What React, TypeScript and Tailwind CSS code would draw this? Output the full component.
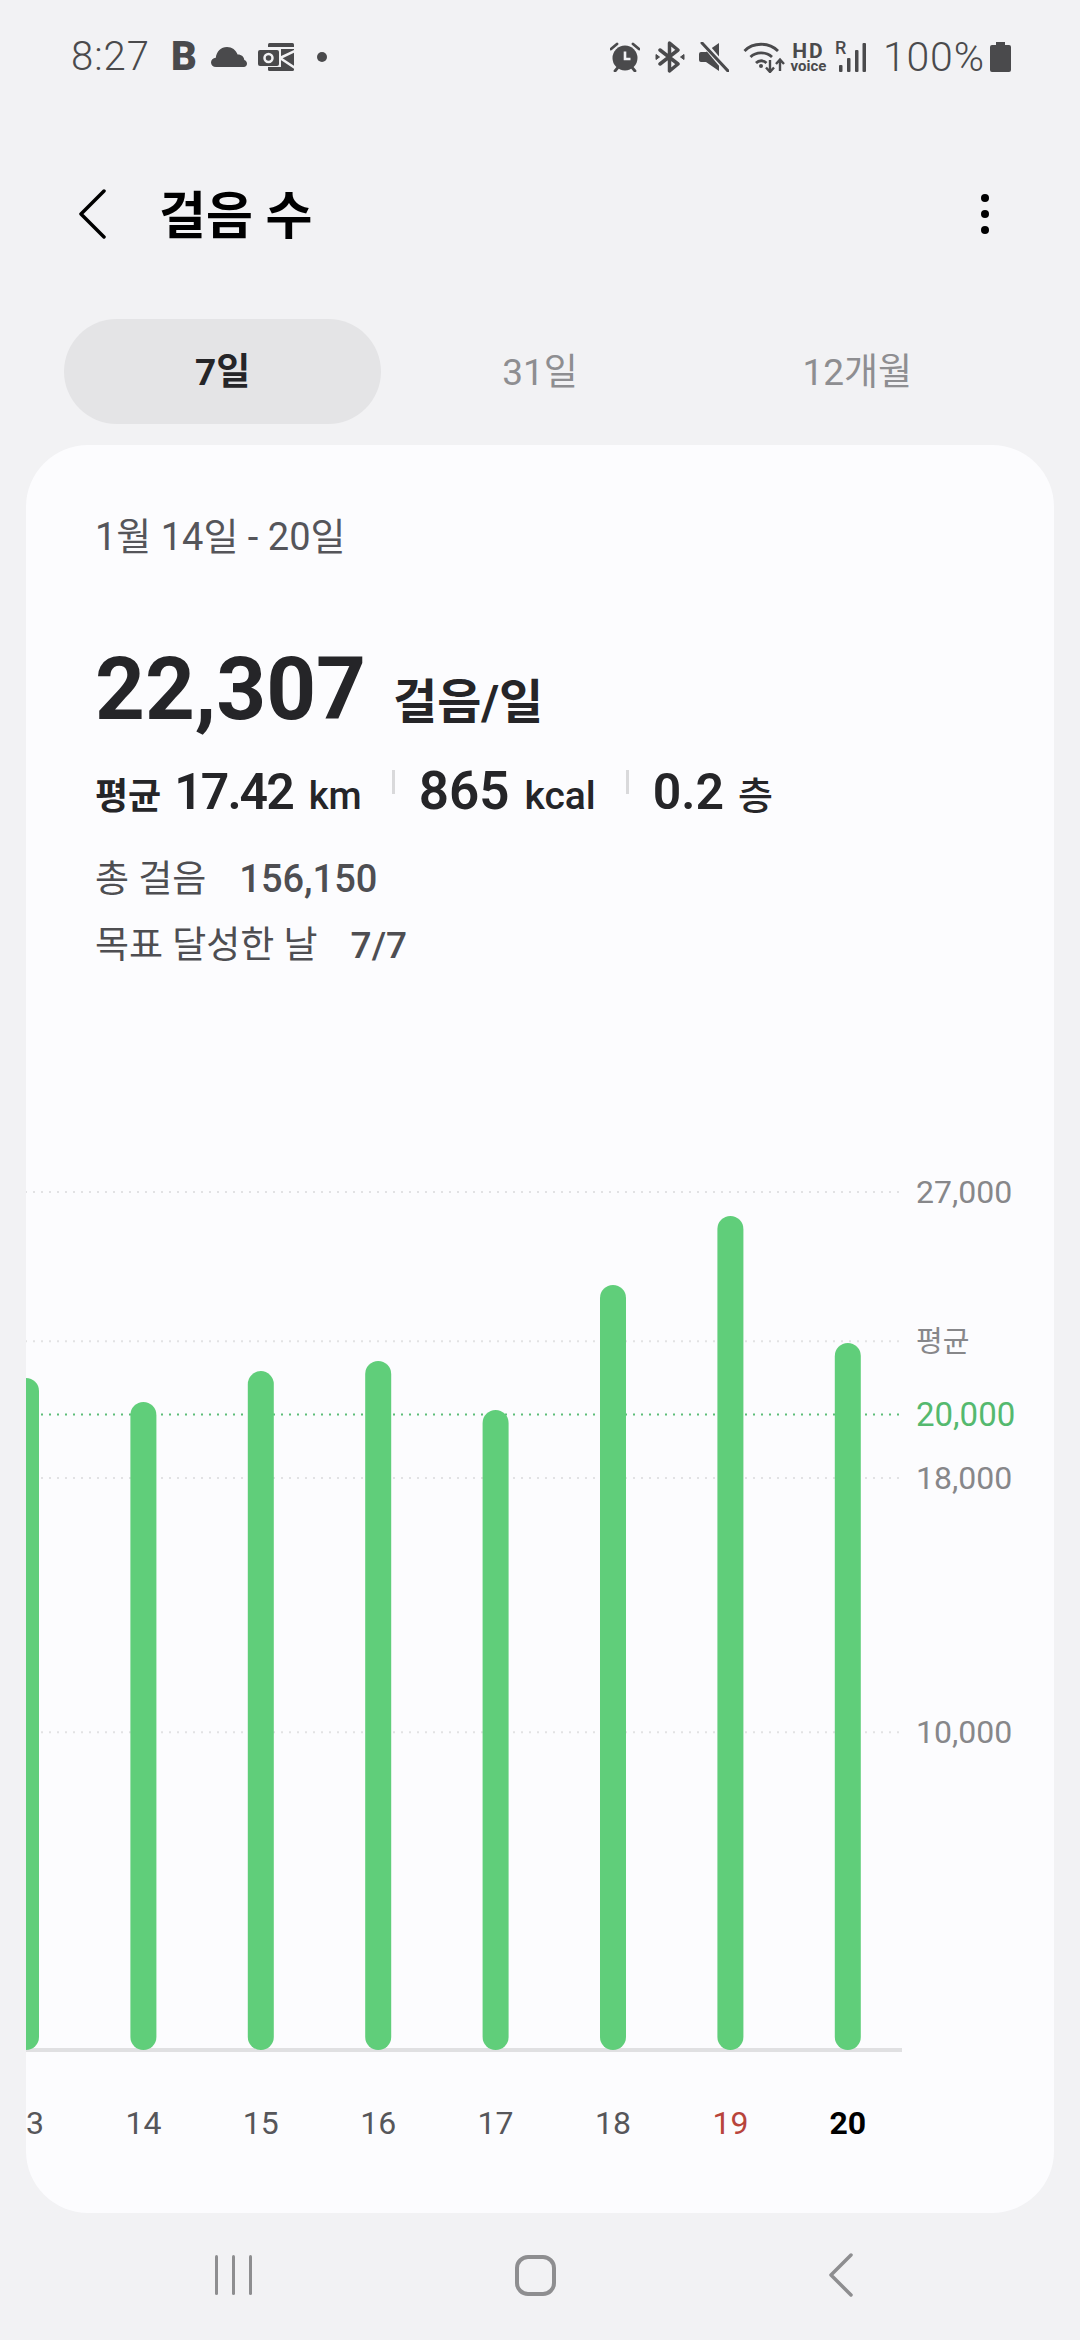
const FONT = "font-['Roboto','Noto_Sans_CJK_KR',sans-serif]";

// daily step counts, the first day is cut off by the card edge
const DAYS = [
  { label: '13', steps: 21145, color: '#56565a', weight: 400 },
  { label: '14', steps: 20390, color: '#56565a', weight: 400 },
  { label: '15', steps: 21365, color: '#56565a', weight: 400 },
  { label: '16', steps: 21680, color: '#56565a', weight: 400 },
  { label: '17', steps: 20139, color: '#56565a', weight: 400 },
  { label: '18', steps: 24072, color: '#56565a', weight: 400 },
  { label: '19', steps: 26243, color: '#b8443b', weight: 400 },
  { label: '20', steps: 22247, color: '#000000', weight: 700 },
];

const GRID = [
  { label: '27,000', steps: 27000, color: '#87878a', line: '#e2e2e4', size: 32, nudge: 11 },
  { label: '평균', steps: 22307, color: '#87878a', line: '#e2e2e4', size: 29, nudge: 11 },
  { label: '20,000', steps: 20000, color: '#55b96f', line: '#5cbd78', size: 33, nudge: 12 },
  { label: '18,000', steps: 18000, color: '#87878a', line: '#e2e2e4', size: 32, nudge: 11 },
  { label: '10,000', steps: 10000, color: '#87878a', line: '#e2e2e4', size: 32, nudge: 11 },
];

const BASE_Y = 870;
const STEP_SCALE = 858 / 27000;
const DAY_GAP = 117.4;

function StepChart() {
  return (
    <svg viewBox="0 0 1028 1033" className={`mt-auto block h-[1033px] w-[1028px] ${FONT}`}>
      {GRID.map(g => {
        const y = BASE_Y - g.steps * STEP_SCALE;
        return (
          <g key={g.label}>
            <line x1={-1} x2={876} y1={y} y2={y} stroke={g.line} strokeWidth={2} strokeDasharray="2 6" />
            <text x={890} y={y + g.nudge} fontSize={g.size} fill={g.color}>{g.label}</text>
          </g>
        );
      })}
      <rect x={0} y={868} width={876} height={4} fill="#e0e0e2" />
      {DAYS.map((d, i) => {
        const h = d.steps * STEP_SCALE;
        return (
          <g key={d.label}>
            <rect x={i * DAY_GAP - 13} y={BASE_Y - h} width={26} height={h} rx={13} fill="#60ce7a" />
            <text x={i * DAY_GAP} y={954} textAnchor="middle" fontSize={32} fontWeight={d.weight} fill={d.color}>{d.label}</text>
          </g>
        );
      })}
    </svg>
  );
}

function CloudIcon() {
  return (
    <svg width="36" height="20" viewBox="0 0 36 20" fill="#4a4a4c">
      <path d="M5 20C2 20 0 18 0 15.500 0 13 2 11 4.800 10.800 5.500 4.500 10 0 16 0c5 0 9 3 10.600 7.600C30.500 7.500 33 10 33.300 13 35 13.600 36 15 36 16.800 36 18.800 34.600 20 32.800 20Z" />
    </svg>
  );
}

function OutlookIcon() {
  return (
    <svg width="36" height="28" viewBox="0 0 36 28">
      <path d="M10 1.500Q10 0 11.500 0H34.500Q36 0 36 1.500V26.500Q36 28 34.500 28H11.500Q10 28 10 26.500Z" fill="#4a4a4c" />
      <rect x="10" y="4" width="26" height="2" fill="#f2f2f4" />
      <rect x="-1" y="6" width="24" height="18" fill="#f2f2f4" />
      <rect x="0" y="7" width="21" height="16" rx="2" fill="#4a4a4c" />
      <circle cx="10.500" cy="15" r="4" fill="none" stroke="#f2f2f4" strokeWidth="2.500" />
      <path d="M22 15L37 8M22 15L37 25" stroke="#f2f2f4" strokeWidth="2.500" fill="none" />
    </svg>
  );
}

function AlarmIcon() {
  return (
    <svg width="30" height="30" viewBox="0 0 30 30" fill="none" stroke="#4a4a4c">
      <circle cx="15" cy="16" r="12.500" fill="#4a4a4c" stroke="none" />
      <path d="M15 9.500V17H20.500" stroke="#f2f2f4" strokeWidth="2.600" />
      <path d="M1 7L7 2M29 7L23 2M5 29L7.500 26M25 29L22.500 26" strokeWidth="2.800" strokeLinecap="round" />
    </svg>
  );
}

function BluetoothIcon() {
  return (
    <svg width="30" height="32" viewBox="0 0 30 32" fill="none" stroke="#4a4a4c">
      <path d="M5 9L23 23L14.500 30V2L23 9L5 23" strokeWidth="3.500" strokeLinejoin="round" strokeLinecap="round" />
      <path d="M1 13.500L4.500 16L1 18.500ZM29 13.500L25.500 16L29 18.500Z" fill="#4a4a4c" strokeWidth="1" />
    </svg>
  );
}

function MuteIcon() {
  return (
    <svg width="30" height="30" viewBox="0 0 30 30">
      <path d="M0 12Q0 10 2 10H7L20 1V29L7 20H2Q0 20 0 18Z" fill="#4a4a4c" />
      <path d="M3 -1L30 31" stroke="#f2f2f4" strokeWidth="6" />
      <path d="M3 1L29 29" stroke="#4a4a4c" strokeWidth="3" strokeLinecap="round" />
    </svg>
  );
}

function WifiIcon() {
  return (
    <svg width="42" height="32" viewBox="0 0 42 32" fill="none" stroke="#4a4a4c" strokeWidth="2.800">
      <path d="M1.500 10C10 1 26 1 35 10" />
      <path d="M7.500 16C13 10.500 23 10.500 29 16" />
      <path d="M13 22C16 19 20.500 19 23.500 22" />
      <circle cx="18" cy="25" r="2" fill="#4a4a4c" stroke="none" />
      <path d="M27 19V30M23 26.500L27 31L31 26.500M37 30V19M33 23L37 18.500L41 23" strokeWidth="2.400" />
    </svg>
  );
}

function SignalIcon() {
  return (
    <svg width="31" height="29" viewBox="0 0 31 29" fill="#4a4a4c" className="absolute left-0 top-0">
      <rect x="4" y="22" width="3.500" height="7" rx="1" />
      <rect x="12" y="15" width="3.500" height="14" rx="1" />
      <rect x="20" y="7" width="3.500" height="22" rx="1" />
      <rect x="27.500" y="0" width="3.500" height="29" rx="1" />
    </svg>
  );
}

function StatusBar() {
  return (
    <div className="flex h-[72px] items-center justify-between mt-[21px] pl-[71px] pr-[69px] text-[#4a4a4c]">
      <div className="flex items-center">
        <span className="w-[77px] text-[40px] font-light leading-none tracking-[1px]">8:27</span>
        <span className="ml-[23px] w-[24px] text-[40px] font-black leading-none">B</span>
        <span className="ml-[16px] flex"><CloudIcon /></span>
        <span className="ml-[11px] flex"><OutlookIcon /></span>
        <span className="ml-[23px] h-[10px] w-[10px] rounded-full bg-[#4a4a4c]" />
      </div>
      <div className="flex items-center">
        <span className="flex"><AlarmIcon /></span>
        <span className="ml-[15px] flex"><BluetoothIcon /></span>
        <span className="ml-[14px] flex"><MuteIcon /></span>
        <span className="ml-[14px] flex"><WifiIcon /></span>
        <div className="ml-[7px] flex w-[33px] flex-col items-center font-bold">
          <span className="text-[21px] leading-[17px] tracking-[2px]">HD</span>
          <span className="text-[15px] leading-[12px]">voice</span>
        </div>
        <div className="relative ml-[10px] h-[29px] w-[31px]">
          <span className="absolute -top-[2px] left-0 text-[18px] font-medium leading-[14px]">R</span>
          <SignalIcon />
        </div>
        <span className="ml-[17px] w-[100px] text-[41px] font-light leading-none tracking-[0.8px]">100%</span>
        <svg width="21" height="30" viewBox="0 0 21 30" className="ml-[7px]" fill="#4a4a4c">
          <path d="M6 0H15V3H19Q21 3 21 5V28Q21 30 19 30H2Q0 30 0 28V5Q0 3 2 3H6Z" />
        </svg>
      </div>
    </div>
  );
}

function Header() {
  return (
    <div className="mt-[61px] flex h-[120px] items-center pl-[78px] pr-[91px]">
      <svg width="30" height="50" viewBox="0 0 30 50" fill="none" stroke="#000" strokeWidth="3.500" strokeLinecap="round" strokeLinejoin="round">
        <path d="M26 2L3 25L26 48" />
      </svg>
      <h1 className="ml-[51px] pt-[5px] text-[51px] font-bold leading-none text-black">걸음 수</h1>
      <div className="ml-auto flex flex-col gap-[8px]">
        <span className="h-[8px] w-[8px] rounded-full bg-black" />
        <span className="h-[8px] w-[8px] rounded-full bg-black" />
        <span className="h-[8px] w-[8px] rounded-full bg-black" />
      </div>
    </div>
  );
}

function Tabs() {
  return (
    <div className="mt-[45px] grid h-[105px] grid-cols-3 px-[64px] text-[37px] leading-none">
      <div className="flex items-center justify-center rounded-full bg-[#e4e4e6] pt-[2px] font-bold text-[#252528]">7일</div>
      <div className="flex items-center justify-center pt-[2px] text-[#8e8e91]">31일</div>
      <div className="flex items-center justify-center pt-[2px] text-[#8e8e91]">12개월</div>
    </div>
  );
}

function Divider() {
  return <span className="ml-[30px] mr-[24px] h-[24px] w-[3px] self-center bg-[#d9d9db]" />;
}

function Summary() {
  return (
    <div className="pl-[69px]">
      <div className="pt-[67px] text-[38px] leading-[50px] text-[#55555a]">1월 14일 - 20일</div>
      <div className="mt-[77px] flex items-baseline text-[#252528]">
        <span className="text-[87px] font-bold leading-[100px]">22,307</span>
        <span className="ml-[27px] text-[48px] font-bold">걸음/일</span>
      </div>
      <div className="mt-[13px] flex h-[60px] items-baseline text-[#252528]">
        <span className="text-[36px] font-bold">평균</span>
        <span className="ml-[13px] text-[50px] font-semibold tracking-[-2px]">17.42</span>
        <span className="ml-[16px] text-[38px] font-medium">km</span>
        <Divider />
        <span className="text-[53px] font-semibold">865</span>
        <span className="ml-[15px] text-[39px] font-medium">kcal</span>
        <Divider />
        <span className="text-[50px] font-semibold">0.2</span>
        <span className="ml-[14px] text-[38px] font-medium">층</span>
      </div>
      <div className="mt-[42px] flex items-baseline text-[37px] leading-[50px] text-[#4e4e52]">
        <span>총 걸음</span>
        <span className="ml-[33px] text-[38px] font-medium">156,150</span>
      </div>
      <div className="mt-[16px] flex items-baseline text-[37px] leading-[50px] text-[#4e4e52]">
        <span>목표 달성한 날</span>
        <span className="ml-[33px] font-medium">7/7</span>
      </div>
    </div>
  );
}

function NavBar() {
  return (
    <div className="relative flex h-[127px] items-center pb-[3px]">
      <div className="ml-[215px] flex h-[40px] gap-[14px]">
        <span className="w-[3px] rounded-full bg-[#8e8e90]" />
        <span className="w-[3px] rounded-full bg-[#8e8e90]" />
        <span className="w-[3px] rounded-full bg-[#8e8e90]" />
      </div>
      <div className="ml-[263px] h-[41px] w-[41px] rounded-[13px] border-[4px] border-[#8e8e90]" />
      <svg width="26" height="44" viewBox="0 0 26 44" className="ml-[272px]" fill="none" stroke="#8e8e90" strokeWidth="3.500" strokeLinecap="round" strokeLinejoin="round">
        <path d="M23 2L3 22L23 42" />
      </svg>
    </div>
  );
}

export default function App() {
  return (
    <div className={`flex h-[2340px] w-[1080px] flex-col overflow-hidden bg-[#f2f2f4] ${FONT}`}>
      <StatusBar />
      <Header />
      <Tabs />
      {/* Card */}
      <div className="mx-[26px] mt-[21px] flex h-[1768px] flex-col overflow-hidden rounded-[62px] bg-[#fcfcfe]">
        <Summary />
        <StepChart />
      </div>
      <NavBar />
    </div>
  );
}
